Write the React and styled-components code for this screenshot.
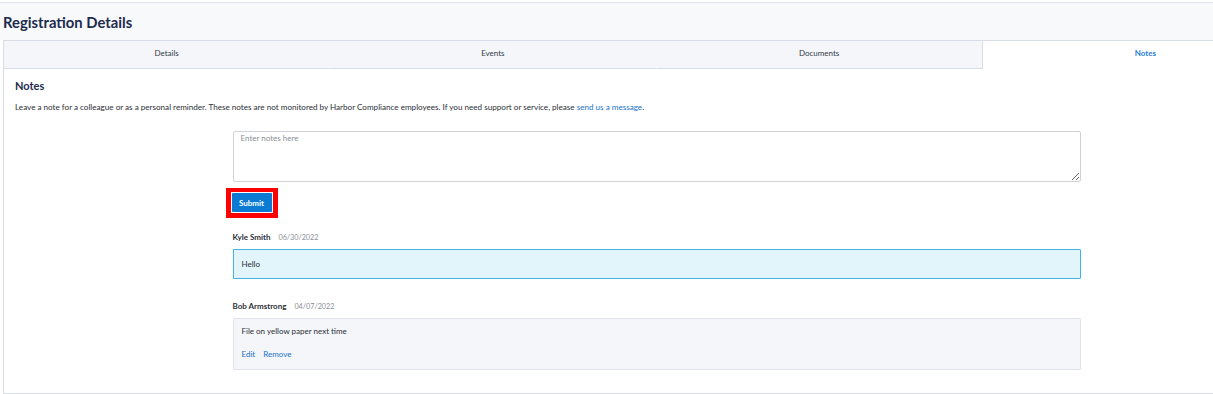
import React from 'react';
import styled, { createGlobalStyle } from 'styled-components';

const GlobalStyle = createGlobalStyle`
  html, body {
    margin: 0;
    padding: 0;
    overflow: hidden;
    background: #ffffff;
    font-family: Lato, "Open Sans", sans-serif;
  }
`;

const Header = styled.div`
  margin-top: 2px;
  border-top: 1px solid #dfe3ea;
  background: #f8f9fb;
  height: 37px;
  padding-left: 3px;
  display: flex;
  align-items: center;
`;

const Title = styled.h1`
  margin: 0;
  font-size: 14.8px;
  font-weight: 700;
  color: #1d2b4d;
`;

const Panel = styled.div`
  margin-left: 3px;
  width: 1306px;
  border: 1px solid #d8dde6;
  border-right: none;
  min-height: 354px;
  box-sizing: border-box;
`;

const TabBar = styled.div`
  display: grid;
  grid-template-columns: repeat(4, 1fr);
  height: 28px;
`;

const Tab = styled.div`
  display: flex;
  align-items: center;
  justify-content: center;
  padding-bottom: 3px;
  font-size: 8px;
  color: ${p => (p.$active ? '#2a7fd4' : '#333a45')};
  font-weight: ${p => (p.$active ? 700 : 400)};
  background: ${p => (p.$active ? '#ffffff' : '#f4f6fa')};
  border-bottom: 1px solid ${p => (p.$active ? 'transparent' : '#d8dde6')};
  border-right: 1px solid ${p => (p.$edge ? '#d8dde6' : 'transparent')};
  box-sizing: border-box;
`;

const Content = styled.div`
  padding: 9px 11px 20px;
`;

const SectionTitle = styled.h2`
  margin: 0;
  font-size: 11px;
  line-height: 16px;
  font-weight: 700;
  color: #1d2b4d;
`;

const Intro = styled.p`
  margin: 7px 0 0;
  font-size: 8.1px;
  line-height: 12px;
  color: #2b2f36;
`;

const Link = styled.a`
  color: #1a73c9;
  text-decoration: none;
  cursor: pointer;
`;

const Column = styled.div`
  width: 848px;
  margin: 18px auto 0;
  display: flex;
  flex-direction: column;
  align-items: flex-start;
`;

const NoteInput = styled.textarea`
  width: 100%;
  height: 51px;
  box-sizing: border-box;
  border: 1px solid #cfd2d6;
  border-radius: 2px;
  padding: 1px 7px;
  font-family: inherit;
  font-size: 8px;
  color: #333;
  &::placeholder {
    color: #8a8f96;
  }
`;

const Highlight = styled.div`
  margin: 6px 0 0 -7px;
  border: 5px solid #ff0000;
  border-top-width: 4px;
  padding: 1px;
  background: #fff;
`;

const SubmitButton = styled.button`
  display: block;
  width: 40px;
  height: 19px;
  border: none;
  border-radius: 1px;
  background: #0a7ad2;
  color: #ffffff;
  font-family: inherit;
  font-size: 8px;
  font-weight: 700;
  padding: 0;
  cursor: pointer;
`;

const NoteMeta = styled.div`
  margin-top: ${p => p.$gap}px;
  display: flex;
  align-items: baseline;
  gap: 8px;
  line-height: 12px;
`;

const Author = styled.span`
  font-size: 8px;
  font-weight: 700;
  color: #2b2f36;
`;

const NoteDate = styled.span`
  font-size: 7.2px;
  color: #8a8f96;
`;

const NoteBox = styled.div`
  margin-top: 5px;
  width: 100%;
  box-sizing: border-box;
  border: 1px solid ${p => (p.$fresh ? '#43b4e2' : '#dfe3ea')};
  background: ${p => (p.$fresh ? '#e1f5fb' : '#f4f6fa')};
  border-radius: 1px;
  padding: ${p => (p.$fresh ? '8px 8px' : '6px 8px 9px')};
  font-size: 8px;
  line-height: 12px;
  color: #2b2f36;
`;

const Actions = styled.div`
  margin-top: 11px;
  display: flex;
  gap: 8px;
`;

const notes = [
  { author: 'Kyle Smith', date: '06/30/2022', text: 'Hello', fresh: true, gap: 13 },
  { author: 'Bob Armstrong', date: '04/07/2022', text: 'File on yellow paper next time', editable: true, gap: 21 },
];

export default function App() {
  return (
    <>
      <GlobalStyle />
      <Header>
        <Title>Registration Details</Title>
      </Header>
      <Panel>
        <TabBar>
          <Tab>Details</Tab>
          <Tab>Events</Tab>
          <Tab $edge>Documents</Tab>
          <Tab $active>Notes</Tab>
        </TabBar>
        <Content>
          <SectionTitle>Notes</SectionTitle>
          <Intro>
            Leave a note for a colleague or as a personal reminder. These notes are not monitored by Harbor
            Compliance employees. If you need support or service, please <Link>send us a message</Link>.
          </Intro>
          <Column>
            <NoteInput placeholder="Enter notes here" />
            <Highlight>
              <SubmitButton>Submit</SubmitButton>
            </Highlight>
            {notes.map(n => (
              <React.Fragment key={n.author}>
                <NoteMeta $gap={n.gap}>
                  <Author>{n.author}</Author>
                  <NoteDate>{n.date}</NoteDate>
                </NoteMeta>
                <NoteBox $fresh={n.fresh}>
                  {n.text}
                  {n.editable && (
                    <Actions>
                      <Link>Edit</Link>
                      <Link>Remove</Link>
                    </Actions>
                  )}
                </NoteBox>
              </React.Fragment>
            ))}
          </Column>
        </Content>
      </Panel>
    </>
  );
}
